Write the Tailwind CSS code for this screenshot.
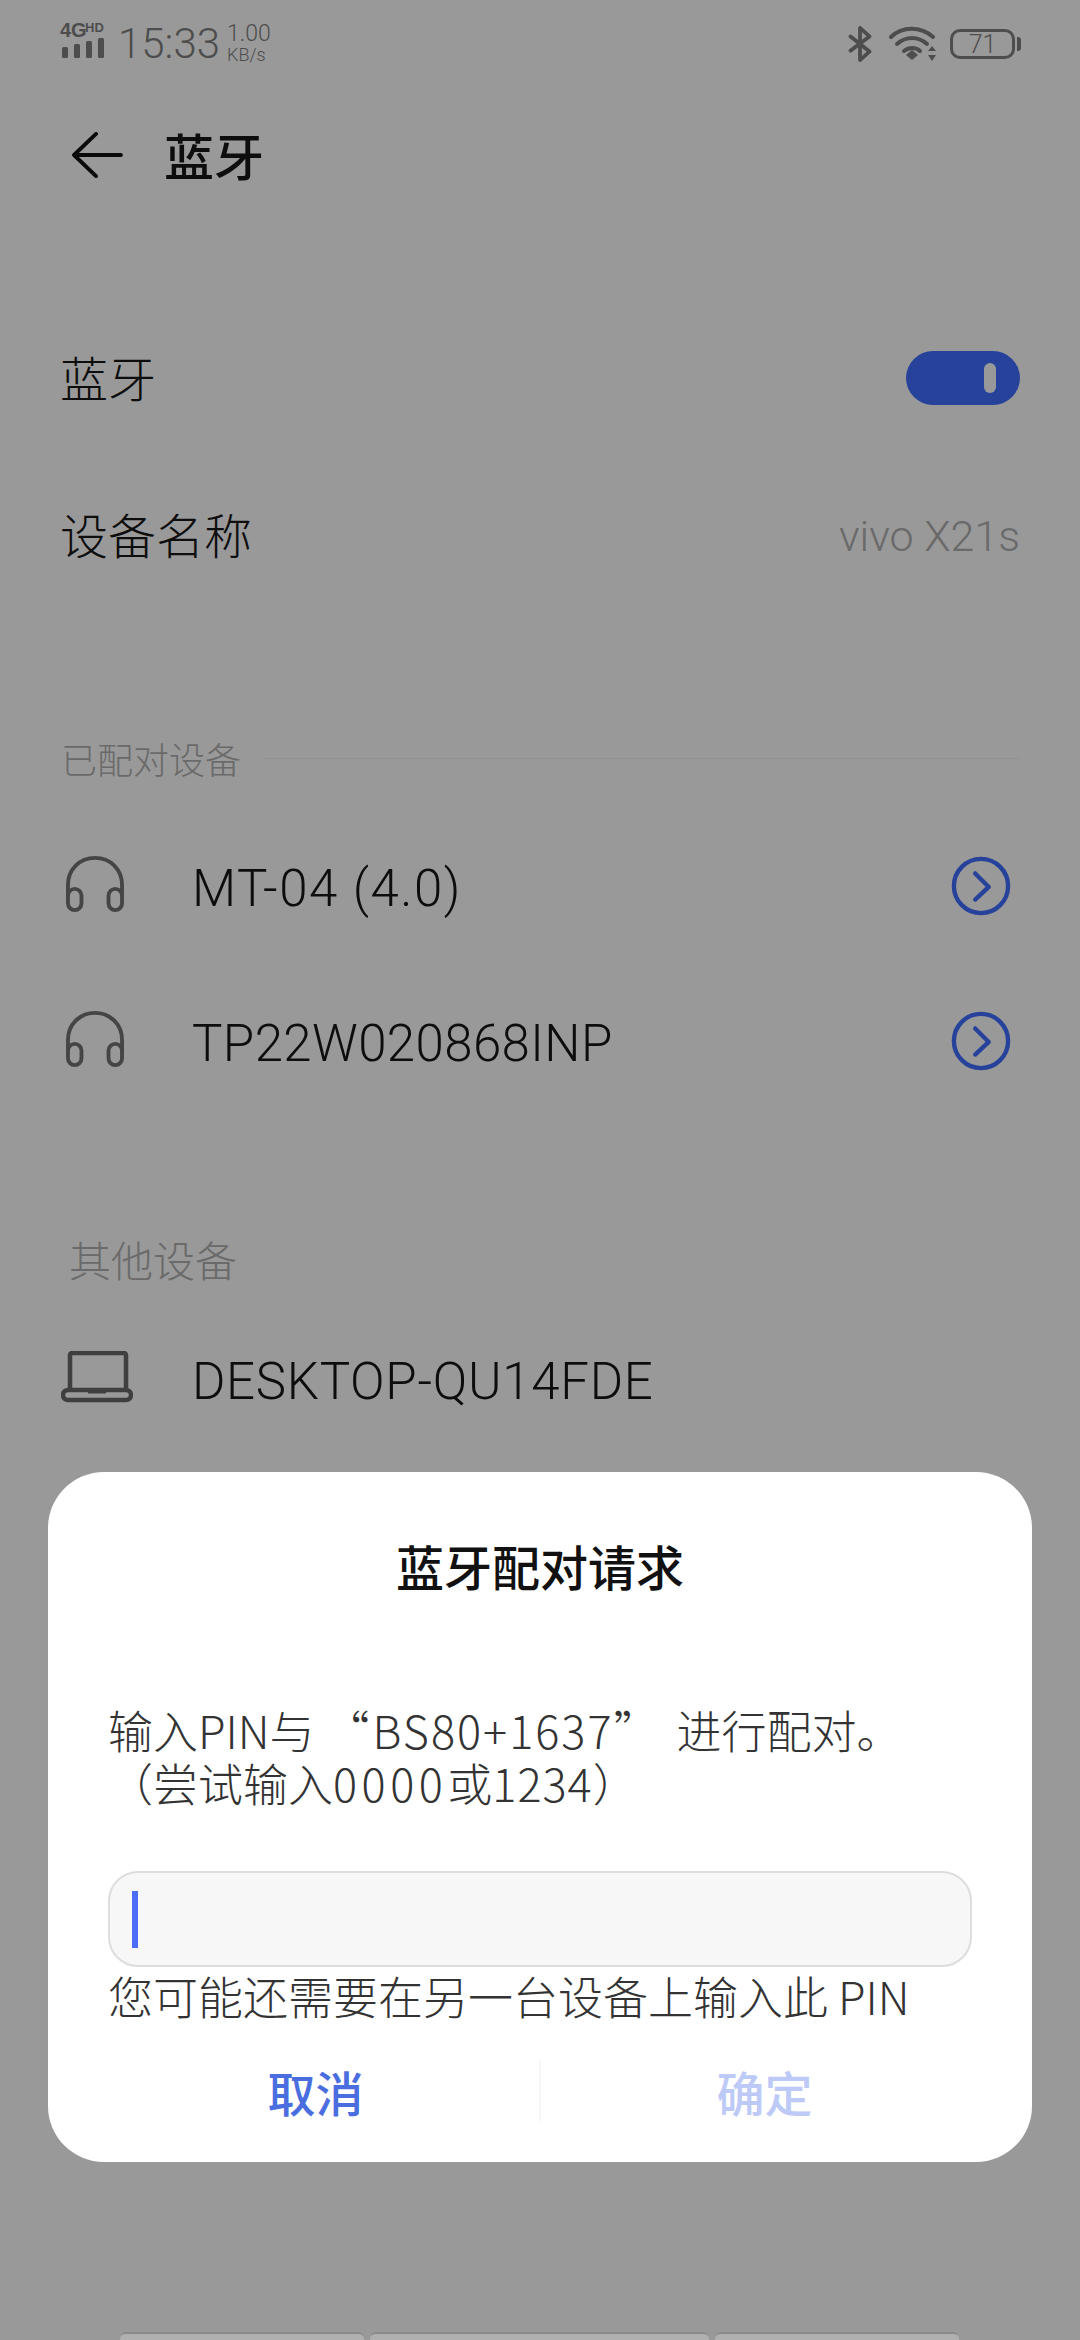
<!DOCTYPE html>
<html lang="zh-CN">
<head>
<meta charset="utf-8">
<script src="https://cdn.jsdelivr.net/npm/@tailwindcss/browser@4"></script>
<title>蓝牙</title>
</head>
<body class="m-0">
<div class="relative w-[1080px] h-[2340px] overflow-hidden bg-[#999999] font-['Noto_Sans_CJK_SC','Noto_Sans',sans-serif] text-[#0d0d0d]">

  <!-- status bar -->
  <div class="h-[88px] pl-[60px] pr-[65px] flex items-center justify-between text-[#4d4d4d]">
    <div class="flex items-center">
      <svg class="-mt-[13px]" width="46" height="44" viewBox="0 0 46 44" fill="#4d4d4d">
        <text x="0" y="21" font-family="Liberation Sans" font-weight="700" font-size="20">4G</text>
        <text x="25" y="16" font-family="Liberation Sans" font-weight="700" font-size="13">HD</text>
        <rect x="2" y="31" width="6" height="11" rx="1.5"/><rect x="14" y="28" width="6" height="14" rx="1.5"/><rect x="26" y="25" width="6" height="17" rx="1.5"/><rect x="38" y="22" width="6" height="20" rx="1.5"/>
      </svg>
      <span class="ml-[12px] text-[42px] font-['Roboto'] font-light leading-none">15:33</span>
      <div class="ml-[7px] flex flex-col items-start font-['Roboto'] leading-none">
        <span class="text-[23px] leading-[22px] font-light">1.00</span>
        <span class="text-[18px] leading-[20px] font-light">KB/s</span>
      </div>
    </div>
    <div class="flex items-center">
      <svg width="24" height="36" viewBox="0 0 24 38" fill="none" stroke="#4d4d4d" stroke-width="4" stroke-linejoin="round" stroke-linecap="round"><path d="M2 26 22 11 12 2V36L22 27 2 11"/></svg>
      <svg class="ml-[17px]" width="50" height="36" viewBox="0 0 50 36" fill="none" stroke="#4d4d4d" stroke-width="4" stroke-linecap="round"><path d="M2 11C13 0 32 0 44 11"/><path d="M8 18C17 10 29 10 38 18"/><path d="M15 25C20 21 27 21 31 25"/><path d="M17 29 23 24 29 29 23 34Z" fill="#4d4d4d" stroke="none"/><path d="M43 20 47 25H39ZM43 35 47 29H39Z" fill="#4d4d4d" stroke="none"/></svg>
      <div class="ml-[11px] relative w-[65px] h-[30px] rounded-[10px] border-[3px] border-[#4d4d4d] flex items-center justify-center text-[25px] leading-none font-['Roboto'] font-light">71
        <span class="absolute right-[-9px] top-[5px] w-[4px] h-[14px] rounded-r-[3px] bg-[#4d4d4d]"></span>
      </div>
    </div>
  </div>

  <!-- title -->
  <div class="h-[134px] pl-[70px] flex items-center">
    <svg width="54" height="46" viewBox="0 0 54 48" fill="none" stroke="#0a0a0a" stroke-width="4" stroke-linecap="round" stroke-linejoin="round"><path d="M26 2 3 24 26 46M3 24H52"/></svg>
    <span class="ml-[40px] -mt-[2px] text-[50px] leading-none font-medium">蓝牙</span>
  </div>

  <!-- settings -->
  <div class="mt-[102px] h-[110px] pl-[60px] pr-[60px] flex items-center justify-between">
    <span class="-mt-[6px] text-[48px] leading-none font-light">蓝牙</span>
    <span class="-mt-[2px] w-[114px] h-[54px] rounded-full bg-[#27429b] flex items-center justify-end pr-[24px]"><span class="w-[12px] h-[30px] rounded-full bg-[#999999]"></span></span>
  </div>
  <div class="mt-[47px] h-[110px] pl-[60px] pr-[60px] flex items-center justify-between">
    <span class="-mt-[6px] text-[48px] leading-none font-light">设备名称</span>
    <span class="text-[43px] leading-none font-['Roboto'] font-light text-[#6a6a6a]">vivo X21s</span>
  </div>

  <!-- paired -->
  <div class="mt-[149px] h-[40px] pl-[61px] pr-[60px] flex items-center">
    <span class="-mt-[4px] text-[36px] leading-none font-light text-[#6a6a6a]">已配对设备</span>
    <span class="ml-[22px] -mt-[4px] flex-1 h-[1px] bg-[#919191]"></span>
  </div>
  <div class="mt-[53px] h-[110px] pl-[65px] pr-[69px] flex items-center">
    <svg class="-mt-[8px]" width="60" height="56" viewBox="0 0 60 58" fill="none" stroke="#454545" stroke-width="4"><path d="M2 42V30C2 14 14 2 30 2S58 14 58 30V42"/><rect x="2" y="34" width="14" height="22" rx="7"/><rect x="44" y="34" width="14" height="22" rx="7"/></svg>
    <span class="ml-[67px] flex-1 text-[51px] leading-none font-['Roboto'] font-light tracking-[1.5px]">MT-04 (4.0)</span>
    <svg class="-mt-[4px]" width="60" height="60" viewBox="0 0 62 62" fill="none" stroke="#27429b" stroke-width="4.5" stroke-linecap="round" stroke-linejoin="round"><circle cx="31" cy="31" r="28"/><path d="M25 18 39 32 25 45"/></svg>
  </div>
  <div class="mt-[45px] h-[110px] pl-[65px] pr-[69px] flex items-center">
    <svg class="-mt-[8px]" width="60" height="56" viewBox="0 0 60 58" fill="none" stroke="#454545" stroke-width="4"><path d="M2 42V30C2 14 14 2 30 2S58 14 58 30V42"/><rect x="2" y="34" width="14" height="22" rx="7"/><rect x="44" y="34" width="14" height="22" rx="7"/></svg>
    <span class="ml-[67px] flex-1 text-[51px] leading-none font-['Roboto'] font-light tracking-[0.4px]">TP22W020868INP</span>
    <svg class="-mt-[4px]" width="60" height="60" viewBox="0 0 62 62" fill="none" stroke="#27429b" stroke-width="4.5" stroke-linecap="round" stroke-linejoin="round"><circle cx="31" cy="31" r="28"/><path d="M25 18 39 32 25 45"/></svg>
  </div>

  <!-- other -->
  <div class="mt-[143px] h-[40px] pl-[69px] flex items-center">
    <span class="-mt-[4px] text-[42px] leading-none font-light text-[#6a6a6a]">其他设备</span>
  </div>
  <div class="mt-[45px] h-[110px] pl-[61px] flex items-center">
    <svg class="-mt-[8px]" width="72" height="52" viewBox="0 0 72 52" fill="none" stroke="#3f3f3f" stroke-width="4.5" stroke-linejoin="round"><path d="M9 39V4A2 2 0 0 1 11 2H63A2 2 0 0 1 65 4V39"/><rect x="2" y="39" width="68" height="10" rx="5"/><path d="M27 41H45" stroke-width="3"/></svg>
    <span class="ml-[59px] text-[51px] leading-none font-['Roboto'] font-light tracking-[0.7px]">DESKTOP-QU14FDE</span>
  </div>

  <!-- keyboard peek -->
  <div class="absolute left-[120px] top-[2332px] flex gap-[6px]">
    <div class="w-[244px] h-[20px] rounded-t-[6px] bg-[#b0b0b0] border-t-2 border-[#8a8a8a]"></div>
    <div class="w-[339px] h-[20px] rounded-t-[6px] bg-[#b0b0b0] border-t-2 border-[#8a8a8a]"></div>
    <div class="w-[244px] h-[20px] rounded-t-[6px] bg-[#b0b0b0] border-t-2 border-[#8a8a8a]"></div>
  </div>

  <!-- dialog -->
  <div class="absolute left-[48px] top-[1472px] w-[984px] h-[690px] rounded-[56px] bg-white flex flex-col px-[60px]">
    <div class="mt-[68px] text-center text-[48px] leading-[50px] font-medium text-[#111111]">蓝牙配对请求</div>
    <div class="mt-[113px] text-[45px] leading-[53px] font-light text-[#333333] whitespace-nowrap">
      <p>输入PIN与 “<span class="ml-[3px] tracking-[2px]">BS80+1637</span>” <span class="ml-[8px]">进行配对。</span></p>
      <p>（尝试输入<span class="tracking-[4.5px]">0000</span>或<span class="tracking-[1px]">1234</span>）</p>
    </div>
    <div class="mt-[62px] h-[96px] rounded-[30px] border-2 border-[#dddddd] bg-[#f7f7f7] flex items-center pl-[22px]">
      <span class="w-[6px] h-[57px] bg-[#4a6cf7]"></span>
    </div>
    <div class="mt-[1px] text-[45px] leading-[56px] font-light text-[#333333] whitespace-nowrap">您可能还需要在另一台设备上输入此 PIN</div>
    <div class="mt-[37px] -mx-[60px] flex items-center h-[60px]">
      <div class="flex-1 text-center text-[48px] leading-none font-medium text-[#4a6ee0] pl-[44px]">取消</div>
      <span class="w-[2px] h-[60px] bg-[#f6f6f6]"></span>
      <div class="flex-1 text-center text-[48px] leading-none font-medium text-[#bdc9f6] pr-[44px]">确定</div>
    </div>
  </div>
</div>
</body>
</html>
